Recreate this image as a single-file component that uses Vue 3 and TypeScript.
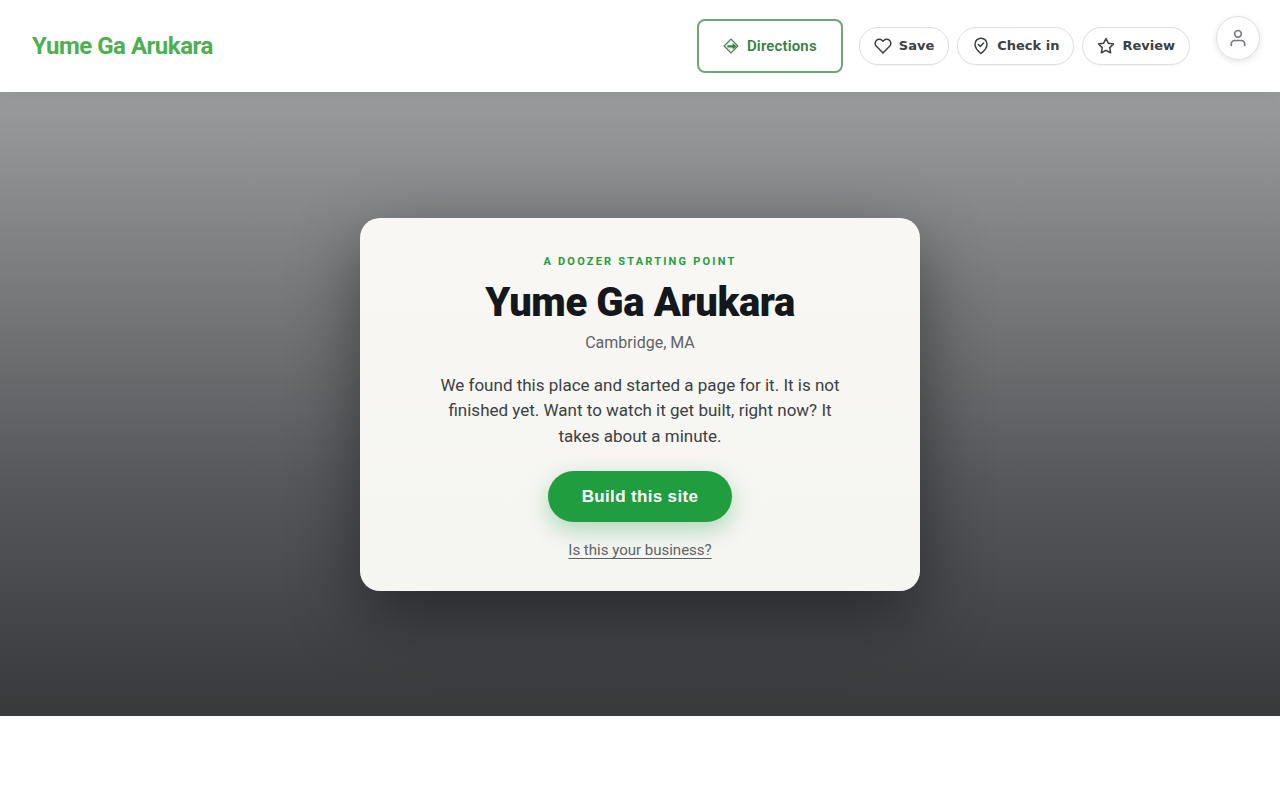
<script setup lang="ts">
interface Action {
  label: string
  paths: string[]
}

const placeName = 'Yume Ga Arukara'

const actions: Action[] = [
  {
    label: 'Save',
    paths: [
      'M20.84 4.61a5.5 5.5 0 0 0-7.78 0L12 5.67l-1.06-1.06a5.5 5.5 0 0 0-7.78 7.78l1.06 1.06L12 21.23l7.78-7.78 1.06-1.06a5.5 5.5 0 0 0 0-7.78z',
    ],
  },
  {
    label: 'Check in',
    paths: ['M12 22s8-6.5 8-12.5a8 8 0 0 0-16 0C4 15.500 12 22 12 22z', 'M8.500 10l2.500 2.500 4.500-4.500'],
  },
  {
    label: 'Review',
    paths: [
      'M12 2l3.090 6.260L22 9.270l-5 4.870 1.180 6.880L12 17.770l-6.180 3.250L7 14.140 2 9.270l6.910-1.010z',
    ],
  },
]
</script>

<template>
  <header class="header">
    <a class="brand" href="#">{{ placeName }}</a>
    <a class="directions" href="#">
      <svg class="directions-icon" viewBox="0 0 16 16" aria-hidden="true">
        <path class="diamond" d="M8 1.200L14.800 8L8 14.800L1.200 8z" />
        <path class="arrow" d="M4 7.200h5.500V5l4 3.200-4 3.200V9.600H4.500z" />
      </svg>
      Directions
    </a>
    <nav class="actions" aria-label="Place actions">
      <button v-for="action in actions" :key="action.label" class="pill" type="button">
        <svg class="pill-icon" viewBox="0 0 24 24" aria-hidden="true">
          <path v-for="d in action.paths" :key="d" :d="d" />
        </svg>
        {{ action.label }}
      </button>
    </nav>
    <button class="account" type="button" aria-label="Account">
      <svg class="account-icon" viewBox="0 0 24 24" aria-hidden="true">
        <path d="M20 21v-2a4 4 0 0 0-4-4H8a4 4 0 0 0-4 4v2" />
        <circle cx="12" cy="7" r="4" />
      </svg>
    </button>
  </header>
  <main class="hero">
    <section class="card">
      <p class="eyebrow">A Doozer starting point</p>
      <h1 class="title">{{ placeName }}</h1>
      <p class="place">Cambridge, MA</p>
      <p class="pitch">
        We found this place and started a page for it. It is not finished yet. Want to watch it get
        built, right now? It takes about a minute.
      </p>
      <button class="build" type="button">Build this site</button>
      <a class="claim" href="#">Is this your business?</a>
    </section>
  </main>
</template>

<style>
body {
  margin: 0;
  background: #fff;
}
</style>

<style scoped>
.header {
  position: relative;
  z-index: 1;
  box-sizing: border-box;
  display: flex;
  align-items: center;
  min-height: 92px;
  padding: 16px 20px 16px 32px;
  background: #fff;
  box-shadow: 0 2px 20px rgba(0, 0, 0, 0.08);
  font-family: Roboto, sans-serif;
}

.brand {
  margin-right: auto;
  color: #4caf50;
  font-size: 24px;
  font-weight: 700;
  line-height: 36px;
  letter-spacing: -0.02em;
  text-decoration: none;
}

.directions {
  display: flex;
  align-items: center;
  gap: 8px;
  margin-right: 16px;
  padding: 13px 24px;
  border: 2px solid #70a579;
  border-radius: 8px;
  color: #38813f;
  font-size: 15px;
  font-weight: 600;
  line-height: 24px;
  letter-spacing: 0.01em;
  text-decoration: none;
}

.directions-icon {
  width: 16px;
  height: 16px;
}

.diamond {
  fill: none;
  stroke: currentColor;
  stroke-width: 1.2;
}

.arrow {
  fill: currentColor;
}

.actions {
  display: flex;
  gap: 8px;
}

.pill {
  display: flex;
  align-items: center;
  gap: 7px;
  padding: 9px 14px;
  border: 1px solid #dfe0e2;
  border-radius: 999px;
  background: #fff;
  box-shadow: 0 1px 2px rgba(0, 0, 0, 0.04);
  color: #3c4043;
  font-family: "DejaVu Sans", sans-serif;
  font-size: 13px;
  font-weight: 700;
  line-height: 18px;
}

.pill-icon,
.account-icon {
  fill: none;
  stroke: currentColor;
  stroke-width: 2;
  stroke-linecap: round;
  stroke-linejoin: round;
}

.pill-icon {
  width: 18px;
  height: 18px;
}

.account {
  display: flex;
  align-items: center;
  justify-content: center;
  align-self: flex-start;
  width: 44px;
  height: 44px;
  margin-left: 26px;
  padding: 0;
  border: 1px solid #e0e0e2;
  border-radius: 50%;
  background: #fff;
  box-shadow: 0 2px 6px rgba(0, 0, 0, 0.1);
  color: #75787d;
}

.account-icon {
  width: 20px;
  height: 20px;
}

.hero {
  box-sizing: border-box;
  display: flex;
  align-items: center;
  justify-content: center;
  min-height: 78vh;
  padding: 49px 24px 48px;
  background: linear-gradient(#9b9c9e 0%, #78797a 32%, #56585c 62%, #434549 85%, #37393b 100%);
  font-family: Roboto, sans-serif;
}

.card {
  box-sizing: border-box;
  display: flex;
  flex-direction: column;
  align-items: center;
  width: 100%;
  max-width: 560px;
  padding: 37px 40px 31px;
  border-radius: 20px;
  background: linear-gradient(#f8f7f4, #f5f5f1);
  box-shadow: 0 24px 70px rgba(0, 0, 0, 0.45);
  text-align: center;
}

.eyebrow {
  margin: 0 0 12px;
  color: #1f9d3f;
  font-size: 11px;
  font-weight: 700;
  line-height: 14px;
  letter-spacing: 0.2em;
  text-transform: uppercase;
}

.title {
  margin: 0 0 6px;
  color: #14171c;
  font-size: 40px;
  font-weight: 900;
  line-height: 44px;
  letter-spacing: -0.01em;
}

.place {
  margin: 0 0 18px;
  color: #5f6368;
  font-size: 16px;
  line-height: 24px;
}

.pitch {
  max-width: 416px;
  margin: 0 0 22px;
  color: #3c4043;
  font-size: 17px;
  line-height: 1.5;
}

.build {
  margin: 0 0 18px;
  padding: 16px 34px;
  border: 0;
  border-radius: 999px;
  background: #1f9d3f;
  box-shadow: 0 8px 22px rgba(31, 157, 63, 0.32);
  color: #fff;
  font-family: "Liberation Sans", sans-serif;
  font-size: 17px;
  font-weight: 700;
  line-height: 19px;
  letter-spacing: 0.02em;
}

.claim {
  color: #5f6368;
  font-size: 15px;
  line-height: 20px;
  text-decoration: underline;
  text-underline-offset: 3px;
}
</style>
